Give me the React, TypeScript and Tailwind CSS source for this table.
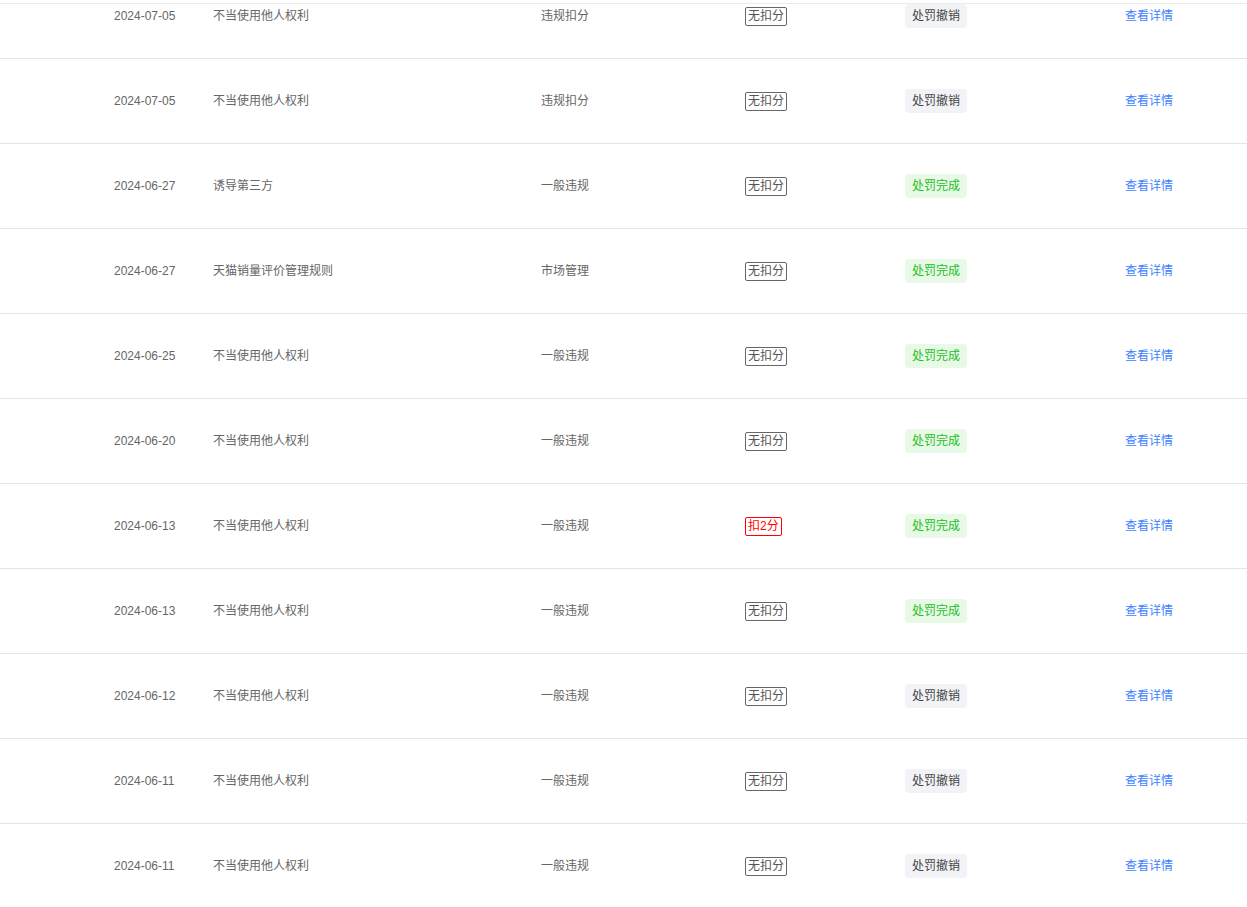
type Row = {
  date: string
  name: string
  type: string
  score: string
  done: boolean
}

const rows: Row[] = [
  { date: '2024-07-05', name: '不当使用他人权利', type: '违规扣分', score: '无扣分', done: false },
  { date: '2024-07-05', name: '不当使用他人权利', type: '违规扣分', score: '无扣分', done: false },
  { date: '2024-06-27', name: '诱导第三方', type: '一般违规', score: '无扣分', done: true },
  { date: '2024-06-27', name: '天猫销量评价管理规则', type: '市场管理', score: '无扣分', done: true },
  { date: '2024-06-25', name: '不当使用他人权利', type: '一般违规', score: '无扣分', done: true },
  { date: '2024-06-20', name: '不当使用他人权利', type: '一般违规', score: '无扣分', done: true },
  { date: '2024-06-13', name: '不当使用他人权利', type: '一般违规', score: '扣2分', done: true },
  { date: '2024-06-13', name: '不当使用他人权利', type: '一般违规', score: '无扣分', done: true },
  { date: '2024-06-12', name: '不当使用他人权利', type: '一般违规', score: '无扣分', done: false },
  { date: '2024-06-11', name: '不当使用他人权利', type: '一般违规', score: '无扣分', done: false },
  { date: '2024-06-11', name: '不当使用他人权利', type: '一般违规', score: '无扣分', done: false },
]

export default function App() {
  return (
    <div
      className="w-[1247px] h-[907px] bg-white overflow-hidden pt-[3px] text-xs"
      style={{ fontFamily: '"Liberation Sans", "Noto Sans CJK SC", sans-serif' }}
    >
      <div className="border-t border-[#ebebeb] overflow-hidden h-[904px]">
        {rows.map((r, i) => (
          <div
            key={i}
            className={
              'grid grid-cols-[114px_99px_328px_204px_160px_220px_1fr] items-center h-[85px] border-b border-[#e5e5e5] ' +
              (i === 0 ? '-mt-[30px]' : '')
            }
          >
            <div />
            <div className="text-[#666]">{r.date}</div>
            <div className="text-[#666]">{r.name}</div>
            <div className="text-[#666]">{r.type}</div>
            <div>
              {r.score === '无扣分' ? (
                <span className="inline-block border border-[#666] rounded-[2px] px-[2px] leading-[17px] text-[#555]">
                  {r.score}
                </span>
              ) : (
                <span className="inline-block border border-[#f00] rounded-[2px] px-[2px] leading-[17px] text-[#f00]">
                  {r.score}
                </span>
              )}
            </div>
            <div>
              {r.done ? (
                <span className="inline-block rounded-[4px] bg-[#e8f9e8] text-[#21c021] px-[7px] leading-6">
                  处罚完成
                </span>
              ) : (
                <span className="inline-block rounded-[4px] bg-[#f2f3f7] text-[#444] px-[7px] leading-6">
                  处罚撤销
                </span>
              )}
            </div>
            <div>
              <a className="text-[#3d7fff] cursor-pointer">查看详情</a>
            </div>
          </div>
        ))}
      </div>
    </div>
  )
}
